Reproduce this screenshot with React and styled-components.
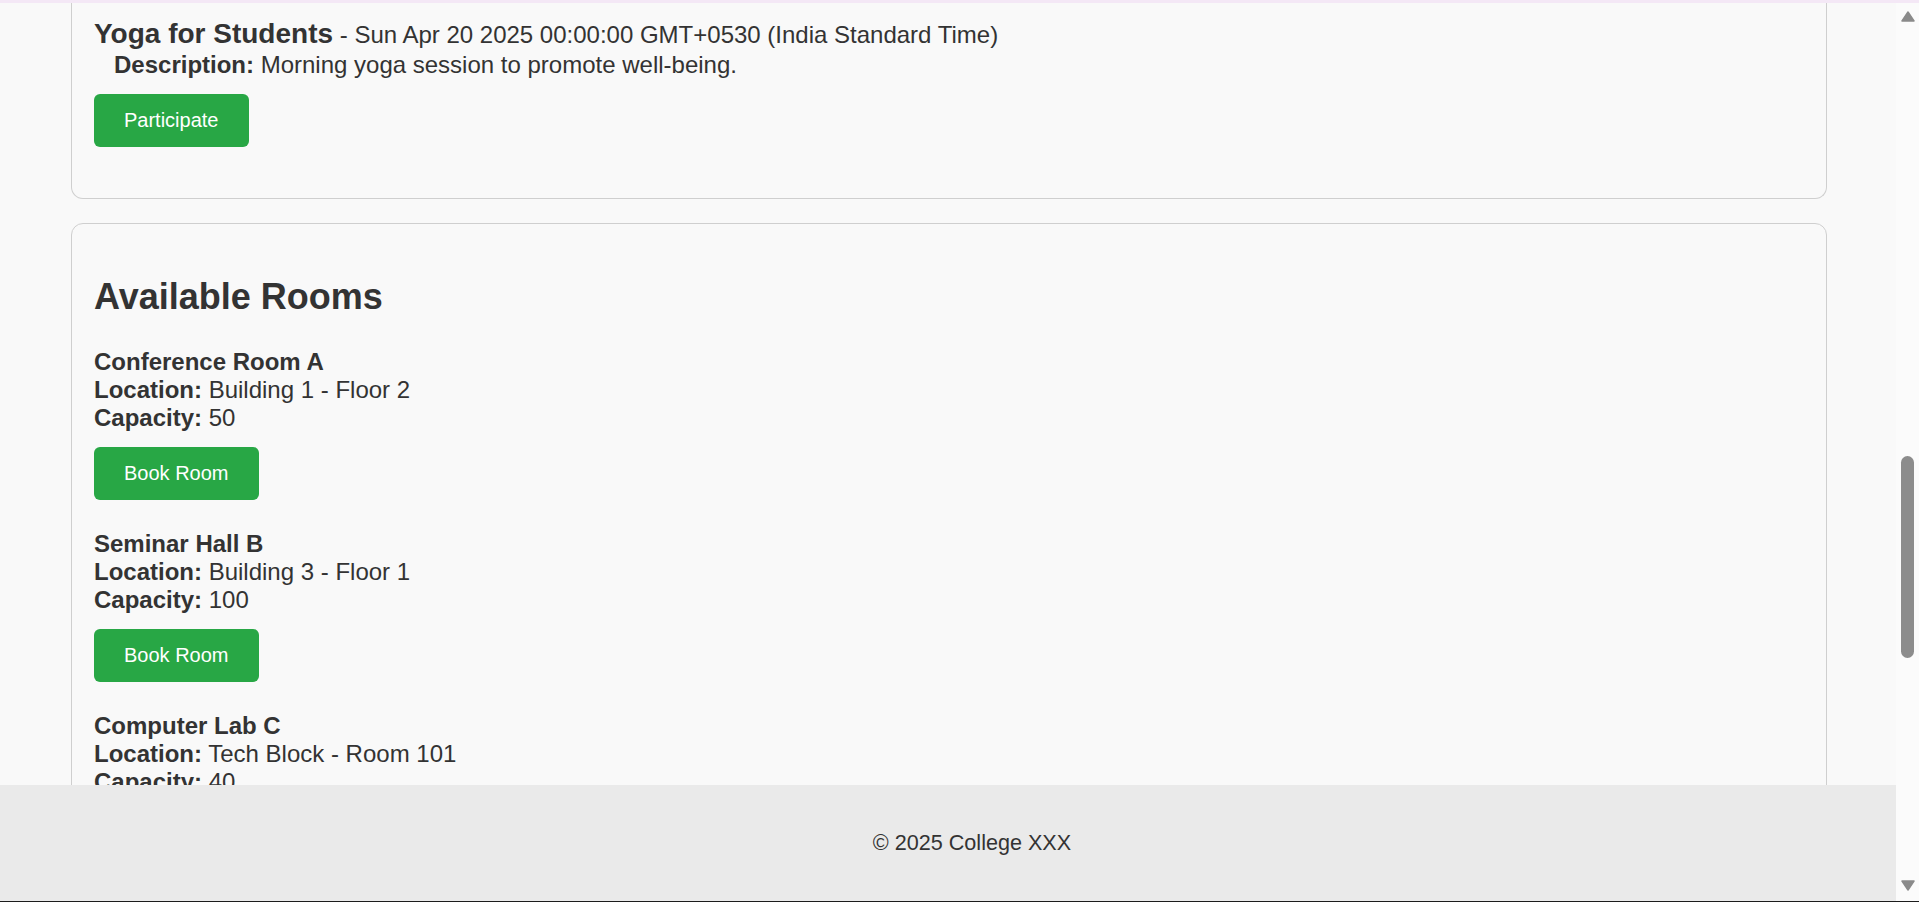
import React from 'react';
import styled, { createGlobalStyle } from 'styled-components';

const rooms = [
  { name: 'Conference Room A', location: 'Building 1 - Floor 2', capacity: 50 },
  { name: 'Seminar Hall B', location: 'Building 3 - Floor 1', capacity: 100 },
  { name: 'Computer Lab C', location: 'Tech Block - Room 101', capacity: 40 },
];

const App = () => {
  return (
    <Window>
      <GlobalStyle />
      <TopEdge />
      <Row>
        <Viewport>
          <ScrollArea>
            <Card $clipped>
              <EventTitle>
                <strong>Yoga for Students</strong>
                <DateText> - Sun Apr 20 2025 00:00:00 GMT+0530 (India Standard Time)</DateText>
              </EventTitle>
              <Description>
                <strong>Description:</strong> Morning yoga session to promote well-being.
              </Description>
              <Button>Participate</Button>
            </Card>
            <Card>
              <Heading>Available Rooms</Heading>
              {rooms.map((room) => (
                <RoomItem key={room.name}>
                  <Line>
                    <strong>{room.name}</strong>
                  </Line>
                  <Line>
                    <strong>Location:</strong> {room.location}
                  </Line>
                  <Line>
                    <strong>Capacity:</strong> {room.capacity}
                  </Line>
                  <Button>Book Room</Button>
                </RoomItem>
              ))}
            </Card>
          </ScrollArea>
          <Footer>© 2025 College XXX</Footer>
        </Viewport>
        <Scrollbar>
          <Arrow width="14" height="11" viewBox="0 0 14 11">
            <path d="M7 1 L13 10 L1 10 Z" />
          </Arrow>
          <Thumb />
          <Spacer />
          <Arrow width="14" height="11" viewBox="0 0 14 11" $down>
            <path d="M1 1 L13 1 L7 10 Z" />
          </Arrow>
        </Scrollbar>
      </Row>
      <BottomEdge />
    </Window>
  );
};

export default App;

const GlobalStyle = createGlobalStyle`
  html, body {
    margin: 0;
    padding: 0;
    overflow: hidden;
  }

  body {
    font-family: "Liberation Sans", Arial, sans-serif;
    color: #333;
    background: #f9f9f9;
  }
`;

const Window = styled.div`
  display: flex;
  flex-direction: column;
  width: 1919px;
  height: 902px;
`;

const TopEdge = styled.div`
  flex: none;
  height: 3px;
  background: #f4e8f6;
`;

const BottomEdge = styled.div`
  flex: none;
  height: 1px;
  background: #1c1c1c;
`;

const Row = styled.div`
  flex: 1;
  display: flex;
  min-height: 0;
`;

const Viewport = styled.div`
  flex: 1;
  min-width: 0;
  display: flex;
  flex-direction: column;
  background: #f9f9f9;
`;

const ScrollArea = styled.div`
  flex: 1;
  min-height: 0;
  overflow: hidden;
  padding: 0 69px 0 71px;
`;

const Card = styled.div`
  background: #f9f9f9;
  border: 1px solid #cfcfcf;
  border-radius: 12px;
  padding: 24px 22px;
  margin-bottom: 24px;

  ${({ $clipped }) =>
    $clipped &&
    `
    border-top: none;
    border-radius: 0 0 12px 12px;
    padding-top: 15px;
    padding-bottom: 51px;
  `}
`;

const EventTitle = styled.div`
  font-size: 28px;

  strong {
    font-weight: bold;
  }
`;

const DateText = styled.span`
  font-size: 24px;
`;

const Description = styled.div`
  font-size: 24px;
  margin-top: 1px;
  padding-left: 20px;
`;

const Heading = styled.h2`
  font-size: 36px;
  font-weight: bold;
  margin: 27.5px 0 30px;
`;

const RoomItem = styled.div`
  font-size: 24px;
  margin-bottom: 30px;
`;

const Line = styled.div``;

const Button = styled.button`
  display: block;
  width: fit-content;
  margin-top: 15px;
  padding: 15px 30px;
  border: none;
  border-radius: 6px;
  background: #28a745;
  color: #fff;
  font-family: "Liberation Sans", Arial, sans-serif;
  font-size: 20px;
  line-height: 23px;
  cursor: pointer;
`;

const Footer = styled.footer`
  flex: none;
  height: 116px;
  box-sizing: border-box;
  padding: 45px 0 0 48px;
  background: #eaeaea;
  text-align: center;
  font-size: 21.6px;
  color: #333;
`;

const Scrollbar = styled.div`
  flex: none;
  width: 23px;
  display: flex;
  flex-direction: column;
  align-items: center;
  background: #fbfbfb;
`;

const Arrow = styled.svg`
  flex: none;
  margin-top: ${({ $down }) => ($down ? '0' : '8px')};
  margin-bottom: ${({ $down }) => ($down ? '10px' : '0')};

  path {
    fill: #8a8a8a;
    stroke: #8a8a8a;
    stroke-width: 1.5;
    stroke-linejoin: round;
  }
`;

const Thumb = styled.div`
  flex: none;
  width: 13px;
  height: 202px;
  margin-top: 434px;
  border-radius: 7px;
  background: #8c8c8c;
`;

const Spacer = styled.div`
  flex: 1;
`;
